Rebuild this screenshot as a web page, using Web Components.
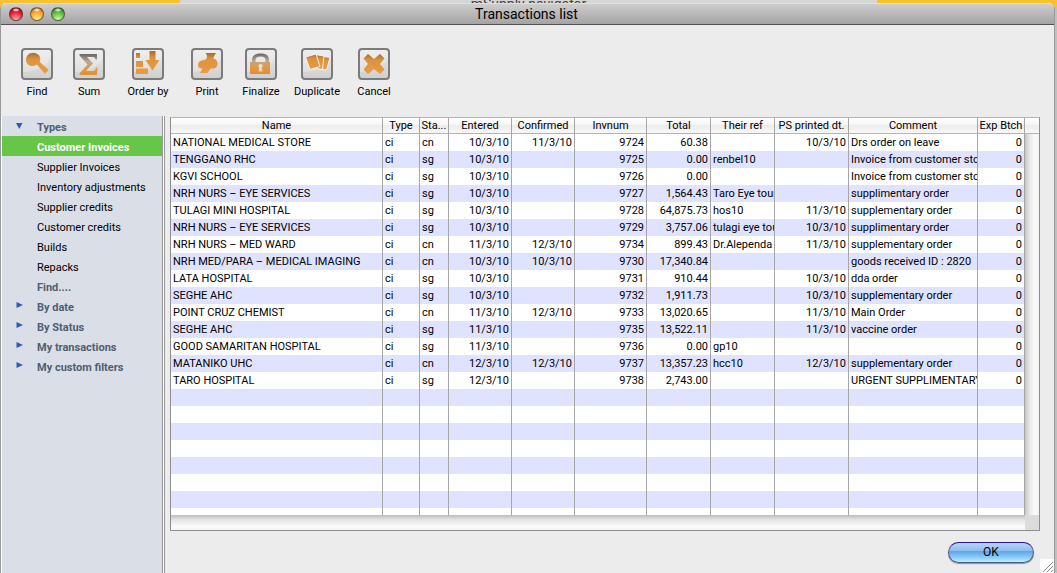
<!DOCTYPE html>
<html lang="en">
<head>
<meta charset="utf-8">
<meta name="viewport" content="width=device-width, initial-scale=1">
<title>Transactions list</title>
<style>
    html, body {
        height: 100%;
        margin: 0;
    }

    body {
        font-family: Roboto, "Noto Sans", sans-serif;
        font-size: 11px;
        color: #000;
        background: #c0c0c0;
        overflow: hidden;
    }
</style>
</head>
<body>
<transactions-app></transactions-app>

<script>
const ICONS = {
    find: '<path d="M11.500 5a6.500 6.500 0 1 0 2.800 12.300l1.500-.8 8 9.200 3.900-3.700-9-7.900.4-1.300A6.500 6.500 0 0 0 11.500 5z"/>',
    sum: '<path d="M6.500 6H24v5.500h-1.500C22 9.500 21 9 19 9h-5l6 6.500-7 7.500h6.500c2.500 0 3-1 3.500-3.500h1.500L24 27H6.500v-1.500l8-9-8-9z"/>',
    order: '<path d="M4 5h4v5H4zM4 13h7v6H4zM4 20.500h12V26H4zM17.500 3h6v9h4L20.500 22.500 13.500 12h4z"/>',
    print: '<path d="M15.500 5H25c-1.500 2-2.500 4-2.500 6h1.500c1.800 1 2.500 2.500 2.500 4.500 0 3-1.500 4.500-4 5h-3L16.500 25H9l2.500-4.500H10c-2 0-3-1.500-3-4 .5-3 2.500-4 6-4.500 2-.5 3-1.500 3-3.500 0-1.500-.5-2.500-1.500-3z"/>',
    finalize: '<path fill-rule="evenodd" d="M5 14h2v-2.500C7 7 11 5.500 15.500 5.500S24 7 24 11.500V14h1v12H5zM10.500 14h10v-2c0-2.500-2-3.500-5-3.500s-5 1-5 3.500zM15.500 16a2 2 0 0 0-1.200 3.600L13.500 23.500h4l-.8-3.900A2 2 0 0 0 15.500 16z"/>',
    duplicate: '<g stroke="#f4f4f4" stroke-width="1"><path d="M19 8l10 1.500L25.500 22 18 21z"/><path d="M14 6.500l9 1.500-1.500 13.500-6-1z"/><path d="M4.500 9l10.500-3 4 12.500-10 3z"/></g>',
    cancel: '<path d="M10 6l6 5 6-5 4.500 4.500-4.500 5.500 4.500 5.500-4.500 4.500-6-5-6 5L5.500 21.500 10 16l-4.500-5.500z"/>'
};

// Round glossy window buttons and the title text
class WindowTitle extends HTMLElement {
    connectedCallback() {
        this.attachShadow({ mode: 'open' });
        this.shadowRoot.innerHTML = `
            <style>
                :host {
                    display: grid;
                    grid-template-columns: 1fr auto 1fr;
                    align-items: center;
                    height: 20px;
                    flex-shrink: 0;
                    padding: 0 10px 0 8px;
                    border-top: 1px solid #e0e0e0;
                    border-bottom: 1px solid #515151;
                    border-radius: 5px 5px 0 0;
                    background: linear-gradient(#cdcdcd, #a4a4a4);
                }

                h1 {
                    margin: 0;
                    font-size: 14px;
                    line-height: 20px;
                    font-weight: 400;
                }

                .lights {
                    display: flex;
                    gap: 7px;
                }

                button {
                    width: 14px;
                    height: 14px;
                    padding: 0;
                    border: 1px solid rgba(60, 40, 40, 0.6);
                    border-radius: 50%;
                }

                .close { background: radial-gradient(ellipse 4px 2px at 50% 2px, #fff, transparent), radial-gradient(circle at 50% 95%, #ffb0b0, #e8152b 60%, #8a0d18); }
                .min { background: radial-gradient(ellipse 4px 2px at 50% 2px, #fff, transparent), radial-gradient(circle at 50% 95%, #fff08a, #f5a32a 60%, #a3500b); }
                .zoom { background: radial-gradient(ellipse 4px 2px at 50% 2px, #fff, transparent), radial-gradient(circle at 50% 95%, #d0ff9e, #55b53c 60%, #1d6412); }
            </style>
            <div class="lights">
                <button class="close" aria-label="Close"></button>
                <button class="min" aria-label="Minimize"></button>
                <button class="zoom" aria-label="Zoom"></button>
            </div>
            <h1><slot></slot></h1>
        `;
    }
}

class ToolButton extends HTMLElement {
    connectedCallback() {
        const icon = this.getAttribute('icon');
        // sum and finalize fade from grey at the top
        const fill = icon === 'sum' || icon === 'finalize' ? 'url(#fade)' : 'url(#orange)';
        this.attachShadow({ mode: 'open' });
        this.shadowRoot.innerHTML = `
            <style>
                :host {
                    display: block;
                }

                button {
                    display: flex;
                    flex-direction: column;
                    align-items: center;
                    gap: 4px;
                    width: 100%;
                    padding: 0;
                    border: 0;
                    background: none;
                    font: inherit;
                    line-height: 16px;
                    color: inherit;
                    white-space: nowrap;
                }

                svg {
                    display: block;
                    width: 32px;
                    height: 32px;
                }
            </style>
            <button>
                <svg viewBox="0 0 32 32" aria-hidden="true">
                    <defs>
                        <linearGradient id="plate" x2="0" y2="1">
                            <stop stop-color="#e9e9e9"/>
                            <stop offset="1" stop-color="#cfcfcf"/>
                        </linearGradient>
                        <linearGradient id="orange" x2="0" y2="1">
                            <stop stop-color="#a86c2a"/>
                            <stop offset=".3" stop-color="#dc933f"/>
                            <stop offset="1" stop-color="#e89c42"/>
                        </linearGradient>
                        <linearGradient id="fade" x2="0" y2="1">
                            <stop stop-color="#666"/>
                            <stop offset=".35" stop-color="#b5a795"/>
                            <stop offset=".65" stop-color="#e39a45"/>
                            <stop offset="1" stop-color="#e08f30"/>
                        </linearGradient>
                    </defs>
                    <rect x="1" y="1" width="30" height="30" rx="3" fill="url(#plate)"/>
                    <path d="M2 24C14 24 26 18 30 10V2H2z" fill="#fff" opacity=".25"/>
                    <rect x="1" y="1" width="30" height="30" rx="3" fill="none" stroke="#7b7b7b" stroke-width="2"/>
                    <g fill="${fill}">${ICONS[icon]}</g>
                </svg>
                <span><slot></slot></span>
            </button>
        `;
    }
}

class FilterItem extends HTMLElement {
    connectedCallback() {
        this.attachShadow({ mode: 'open' });
        this.shadowRoot.innerHTML = `
            <style>
                :host {
                    display: block;
                }

                a {
                    display: grid;
                    grid-template-columns: 35px 1fr;
                    height: 20px;
                    line-height: 24px;
                    color: #000;
                    text-decoration: none;
                    white-space: nowrap;
                }

                :host([group]) a {
                    color: #4f6072;
                    font-weight: 700;
                }

                :host([selected]) a {
                    color: #fff;
                    font-weight: 700;
                    background: #67c547;
                }

                svg {
                    width: 7px;
                    height: 7px;
                    margin: 6px 0 0 14px;
                    fill: #2c5db5;
                    visibility: hidden;
                }

                :host([arrow]) svg {
                    visibility: visible;
                }
            </style>
            <a href="#">
                <svg viewBox="0 0 7 7" aria-hidden="true">
                    <path d="${this.getAttribute('arrow') === 'down' ? 'M0 1h6.500L3.250 7z' : 'M.5 0L7 3 .5 6z'}"/>
                </svg>
                <span><slot></slot></span>
            </a>
        `;
    }
}

const COLUMNS = [
    { title: 'Name' },
    { title: 'Type', width: 37 },
    { title: 'Sta...', width: 29 },
    { title: 'Entered', width: 63, right: true },
    { title: 'Confirmed', width: 63, right: true },
    { title: 'Invnum', width: 72, right: true },
    { title: 'Total', width: 64, right: true },
    { title: 'Their ref', width: 64 },
    { title: 'PS printed dt.', width: 74, right: true },
    { title: 'Comment', width: 129 },
    { title: 'Exp Btch', width: 47, right: true }
];

const ROWS = [
    ['NATIONAL MEDICAL STORE', 'ci', 'cn', '10/3/10', '11/3/10', '9724', '60.38', '', '10/3/10', 'Drs order on leave', '0'],
    ['TENGGANO RHC', 'ci', 'sg', '10/3/10', '', '9725', '0.00', 'renbel10', '', 'Invoice from customer stock', '0'],
    ['KGVI SCHOOL', 'ci', 'sg', '10/3/10', '', '9726', '0.00', '', '', 'Invoice from customer stock', '0'],
    ['NRH NURS – EYE SERVICES', 'ci', 'sg', '10/3/10', '', '9727', '1,564.43', 'Taro Eye tour', '', 'supplimentary order', '0'],
    ['TULAGI MINI HOSPITAL', 'ci', 'sg', '10/3/10', '', '9728', '64,875.73', 'hos10', '11/3/10', 'supplementary order', '0'],
    ['NRH NURS – EYE SERVICES', 'ci', 'sg', '10/3/10', '', '9729', '3,757.06', 'tulagi eye tour', '10/3/10', 'supplimentary order', '0'],
    ['NRH NURS – MED WARD', 'ci', 'cn', '11/3/10', '12/3/10', '9734', '899.43', 'Dr.Alependa', '11/3/10', 'supplementary order', '0'],
    ['NRH MED/PARA – MEDICAL IMAGING', 'ci', 'cn', '10/3/10', '10/3/10', '9730', '17,340.84', '', '', 'goods received ID : 2820', '0'],
    ['LATA HOSPITAL', 'ci', 'sg', '10/3/10', '', '9731', '910.44', '', '10/3/10', 'dda order', '0'],
    ['SEGHE AHC', 'ci', 'sg', '10/3/10', '', '9732', '1,911.73', '', '10/3/10', 'supplementary order', '0'],
    ['POINT CRUZ CHEMIST', 'ci', 'cn', '11/3/10', '12/3/10', '9733', '13,020.65', '', '11/3/10', 'Main Order', '0'],
    ['SEGHE AHC', 'ci', 'sg', '11/3/10', '', '9735', '13,522.11', '', '11/3/10', 'vaccine order', '0'],
    ['GOOD SAMARITAN HOSPITAL', 'ci', 'sg', '11/3/10', '', '9736', '0.00', 'gp10', '', '', '0'],
    ['MATANIKO UHC', 'ci', 'cn', '12/3/10', '12/3/10', '9737', '13,357.23', 'hcc10', '12/3/10', 'supplementary order', '0'],
    ['TARO HOSPITAL', 'ci', 'sg', '12/3/10', '', '9738', '2,743.00', '', '', 'URGENT SUPPLIMENTARY', '0']
];

class TransactionGrid extends HTMLElement {
    connectedCallback() {
        // blank rows carry the stripes on below the data
        const blanks = Array.from({ length: 40 }, () => COLUMNS.map(() => ''));
        const cols = COLUMNS.map(c => `<col${c.width ? ` style="width: ${c.width}px"` : ''}>`).join('');
        const head = COLUMNS.map(c => `<th scope="col">${c.title}</th>`).join('');
        const body = ROWS.concat(blanks).map(row =>
            `<tr>${row.map((v, i) => `<td${COLUMNS[i].right ? ' class="right"' : ''}>${v}</td>`).join('')}</tr>`
        ).join('');

        this.attachShadow({ mode: 'open' });
        this.shadowRoot.innerHTML = `
            <style>
                :host {
                    display: grid;
                    grid-template-columns: minmax(0, 1fr) 14px;
                    grid-template-rows: minmax(0, 1fr) 15px;
                    min-height: 0;
                    border: 1px solid #8e8e8e;
                    border-top-color: #b4b4b4;
                    background: #fff;
                }

                .rows {
                    overflow: hidden;
                }

                table {
                    width: 100%;
                    table-layout: fixed;
                    border-collapse: separate;
                    border-spacing: 0;
                }

                th, td {
                    box-sizing: border-box;
                    height: 17px;
                    padding: 0 2px;
                    border-right: 1px solid #a6a6a6;
                    line-height: 17px;
                    font-weight: 400;
                    text-align: left;
                    white-space: nowrap;
                    overflow: hidden;
                }

                th, .corner {
                    height: 16px;
                    line-height: 15px;
                    text-align: center;
                    border-bottom: 1px solid #b4b4b4;
                    background: linear-gradient(#fff, #f6f6f6 45%, #ececec 50%, #f8f8f8);
                }

                th {
                    padding: 0;
                }

                tbody tr:nth-child(even) {
                    background: #dfe3ff;
                }

                .right {
                    text-align: right;
                }

                .side {
                    display: flex;
                    flex-direction: column;
                }

                .corner {
                    box-sizing: border-box;
                }

                .vtrack {
                    flex: 1;
                    background: linear-gradient(90deg, #c6c6c6, #e6e6e6 30%, #fbfbfb 70%, #f3f3f3);
                }

                .htrack {
                    background: linear-gradient(#bdbdbd, #e2e2e2 30%, #fbfbfb 75%, #f5f5f5);
                }

                .box {
                    background: #dcdcdc;
                }
            </style>
            <div class="rows">
                <table>
                    <colgroup>${cols}</colgroup>
                    <thead><tr>${head}</tr></thead>
                    <tbody>${body}</tbody>
                </table>
            </div>
            <div class="side"><div class="corner"></div><div class="vtrack"></div></div>
            <div class="htrack"></div>
            <div class="box"></div>
        `;
    }
}

class AquaButton extends HTMLElement {
    connectedCallback() {
        this.attachShadow({ mode: 'open' });
        this.shadowRoot.innerHTML = `
            <style>
                :host {
                    display: block;
                }

                button {
                    display: block;
                    width: 86px;
                    height: 21px;
                    padding: 0 0 2px;
                    border: 1px solid #4a5d86;
                    border-top: 1px solid #28149a;
                    border-radius: 11px;
                    background: linear-gradient(#b9d5f4, #8fbdee 40%, #5fa5e8 45%, #8ccbf8 75%, #b8f0ff);
                    box-shadow: 0 1px 1px rgba(0, 0, 0, 0.4);
                    font: inherit;
                    font-size: 12px;
                    line-height: 16px;
                    color: #000;
                }
            </style>
            <button><slot></slot></button>
        `;
    }
}

class TransactionsApp extends HTMLElement {
    connectedCallback() {
        this.attachShadow({ mode: 'open' });
        this.shadowRoot.innerHTML = `
            <style>
                :host {
                    display: flex;
                    flex-direction: column;
                    height: 100vh;
                }

                /* sliver of the navigator window behind this one */
                .behind {
                    display: grid;
                    grid-template-columns: 17fr 66fr 17fr;
                    height: 3px;
                    flex-shrink: 0;
                    background: #f7c22e;
                    margin-bottom: -5px;
                    padding-bottom: 5px;
                }

                .behind-title {
                    grid-column: 2;
                    display: grid;
                    grid-template-columns: 1fr auto 1fr;
                    align-items: end;
                    height: 3px;
                    overflow: hidden;
                    background: #d6d6d6;
                    color: #444;
                    font-size: 14px;
                    line-height: 8px;
                }

                .dots {
                    display: flex;
                    gap: 7px;
                    padding-left: 8px;
                }

                .dots i {
                    width: 14px;
                    height: 3px;
                    background: #ababab;
                    border-radius: 0 0 5px 5px;
                }

                .window {
                    display: flex;
                    flex-direction: column;
                    flex: 1;
                    min-height: 0;
                    margin-right: 2px;
                    border-left: 1px solid #999;
                    border-right: 1px solid #999;
                    border-radius: 6px 6px 0 0;
                    background: #ececec;
                }

                .tools {
                    display: grid;
                    grid-template-columns: 52px 52px 66px 52px 56px 56px 58px;
                    flex-shrink: 0;
                    padding: 23px 10px 16px;
                }

                .content {
                    display: grid;
                    grid-template-columns: 164px minmax(0, 1fr);
                    flex: 1;
                    min-height: 0;
                }

                /* double rule between the list and the grid */
                nav {
                    display: flex;
                    flex-direction: column;
                    padding: 0 1px;
                    border-right: 1px solid #999;
                    background: #fff;
                }

                .list {
                    flex: 1;
                    background: #dadee7;
                    border-right: 1px solid #999;
                }

                main {
                    display: flex;
                    flex-direction: column;
                    min-width: 0;
                    min-height: 0;
                    padding: 1px 0 0 5px;
                }

                transaction-grid {
                    flex: 1;
                    margin-right: 14px;
                }

                footer {
                    display: flex;
                    justify-content: flex-end;
                    flex-shrink: 0;
                    height: 42px;
                }

                aqua-button {
                    margin: 11px 6px 0 0;
                }

                .grip {
                    align-self: flex-end;
                    display: block;
                    width: 14px;
                    height: 14px;
                    background: #fff;
                }
            </style>
            <div class="behind">
                <div class="behind-title">
                    <div class="dots"><i></i><i></i><i></i></div>
                    <span>mSupply navigator</span>
                </div>
            </div>
            <div class="window">
                <window-title>Transactions list</window-title>
                <div class="tools" role="toolbar">
                    <tool-button icon="find">Find</tool-button>
                    <tool-button icon="sum">Sum</tool-button>
                    <tool-button icon="order">Order by</tool-button>
                    <tool-button icon="print">Print</tool-button>
                    <tool-button icon="finalize">Finalize</tool-button>
                    <tool-button icon="duplicate">Duplicate</tool-button>
                    <tool-button icon="cancel">Cancel</tool-button>
                </div>
                <div class="content">
                    <nav>
                        <div class="list">
                            <filter-item group arrow="down">Types</filter-item>
                            <filter-item selected>Customer Invoices</filter-item>
                            <filter-item>Supplier Invoices</filter-item>
                            <filter-item>Inventory adjustments</filter-item>
                            <filter-item>Supplier credits</filter-item>
                            <filter-item>Customer credits</filter-item>
                            <filter-item>Builds</filter-item>
                            <filter-item>Repacks</filter-item>
                            <filter-item group>Find....</filter-item>
                            <filter-item group arrow="right">By date</filter-item>
                            <filter-item group arrow="right">By Status</filter-item>
                            <filter-item group arrow="right">My transactions</filter-item>
                            <filter-item group arrow="right">My custom filters</filter-item>
                        </div>
                    </nav>
                    <main>
                        <transaction-grid></transaction-grid>
                        <footer>
                            <aqua-button>OK</aqua-button>
                            <svg class="grip" viewBox="0 0 14 14" aria-hidden="true">
                                <path d="M3 13L13 3M7 13l6-6M11 13l2-2" stroke="#8a8a8a" stroke-width="1"/>
                            </svg>
                        </footer>
                    </main>
                </div>
            </div>
        `;
    }
}

customElements.define('window-title', WindowTitle);
customElements.define('tool-button', ToolButton);
customElements.define('filter-item', FilterItem);
customElements.define('transaction-grid', TransactionGrid);
customElements.define('aqua-button', AquaButton);
customElements.define('transactions-app', TransactionsApp);
</script>
</body>
</html>
